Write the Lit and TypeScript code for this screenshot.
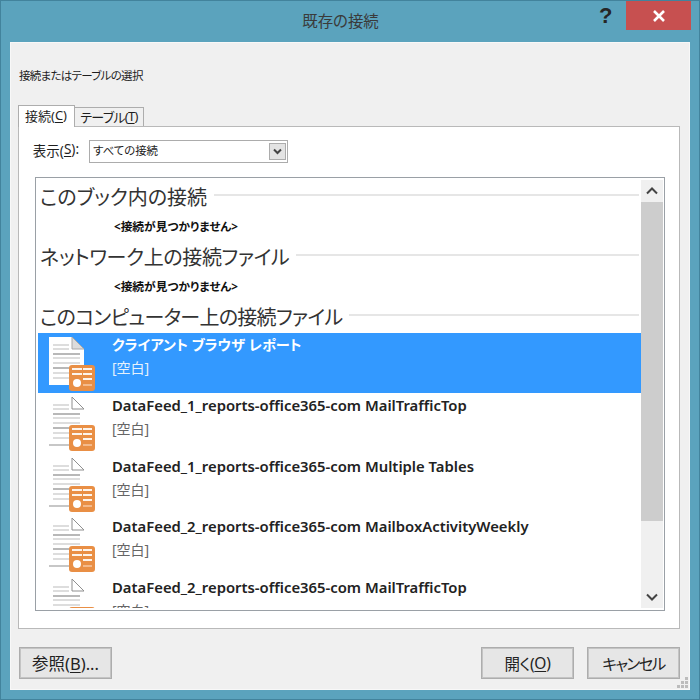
import { LitElement, html, css, svg } from 'lit';
import { customElement, property } from 'lit/decorators.js';

const UI_FONT = css`'Noto Sans', 'Noto Sans CJK JP', sans-serif`;

@customElement('doc-icon')
export class DocIcon extends LitElement {
  @property({ type: Boolean }) selected = false;

  static styles = css`
    :host { display: block; width: 48px; height: 58px; flex: none; }
    svg { display: block; }
  `;

  render() {
    const line = '#a0a0a0';
    const lines = [10, 14, 19, 23, 28, 33, 38, 43];
    return html`<svg width="48" height="58" viewBox="0 0 48 58">
      ${this.selected
        ? svg`<path d="M1 2H24L36 14V50H1Z" fill="#fff"/>
              <path d="M24 2V14H36Z" fill="#dcdcdc" stroke="#a8a8a8"/>`
        : svg`<path d="M24 2L36 14H24Z" fill="#fff" stroke="#8f8f8f"/>
              <path d="M1 50H22" stroke="#8f8f8f"/>`}
      ${lines.map((y, i) => svg`<path d="M5 ${y}H${i < 2 ? 21 : i > 4 ? 21 : 32}" stroke=${line} stroke-width=${i === 2 || i === 5 ? 1.5 : 1} opacity=${i === 2 || i === 5 ? 1 : 0.7}/>`)}
      <rect x="21" y="30" width="26" height="26" rx="3" fill="#e98f45"/>
      <path d="M24 34H34M35 34H44M24 39H34M35 39H44M35 44H44" stroke="#fff" stroke-width="1.8" opacity="0.9"/>
      <circle cx="29" cy="48" r="4" fill="#fff"/>
      <path d="M35 50H44" stroke="#f6c9a4" stroke-width="1.5"/>
    </svg>`;
  }
}

@customElement('app-root')
export class AppRoot extends LitElement {
  static styles = css`
    :host {
      display: block;
      width: 700px;
      height: 700px;
      box-sizing: border-box;
      background: #5ba3bd;
      border: 1px solid #42839c;
      position: relative;
      font-family: ${UI_FONT};
      font-feature-settings: 'palt';
      font-size: 12px;
      color: #1e1e1e;
      overflow: hidden;
    }
    .titlebar {
      height: 41px;
      display: flex;
      align-items: center;
      justify-content: center;
      font-size: 15.4px;
      color: #3a3a3a;
      padding: 0 19px 2px 0;
      box-sizing: border-box;
    }
    .help {
      position: absolute;
      left: 598px;
      top: 2px;
      font: bold 22px 'Liberation Sans', sans-serif;
      color: #262626;
    }
    .close {
      position: absolute;
      left: 625px;
      top: 0;
      width: 65px;
      height: 29px;
      background: #c75050;
      display: flex;
      align-items: center;
      justify-content: center;
    }
    .client {
      margin: 0 9px;
      height: 648px;
      box-sizing: border-box;
      background: #f0f0f0;
      border: 1px solid #f8f8f8;
      padding: 0 9px 0 7px;
      display: flex;
      flex-direction: column;
    }
    .caption {
      height: 62px;
      display: flex;
      align-items: center;
      padding: 1px 0 0 1px;
      font-size: 11.5px;
      letter-spacing: -0.7px;
      box-sizing: border-box;
    }
    .tabs {
      display: flex;
      align-items: flex-end;
      height: 21px;
      position: relative;
      z-index: 1;
    }
    .tab {
      box-sizing: border-box;
      border: 1px solid #adadad;
      border-bottom: none;
      display: flex;
      align-items: center;
      justify-content: center;
      font-size: 13px;
      letter-spacing: -0.7px;
      background: #f0f0f0;
      height: 19px;
      width: 69px;
      padding-bottom: 2px;
      border-left: none;
    }
    .tab.on {
      background: #fff;
      height: 22px;
      width: 57px;
      border-left: 1px solid #adadad;
      margin-bottom: -1px;
      padding: 0 1px 3px 0;
      letter-spacing: 0;
    }
    .panel {
      box-sizing: border-box;
      width: 662px;
      height: 503px;
      background: #fff;
      border: 1px solid #b9b9b9;
      padding: 13px 14px 0 16px;
    }
    .show {
      display: flex;
      align-items: center;
      gap: 10px;
      height: 23px;
    }
    .show label {
      font-size: 13.5px;
      width: 44px;
      display: flex;
      justify-content: flex-end;
      margin-top: -3px;
      white-space: nowrap;
    }
    .select {
      box-sizing: border-box;
      width: 199px;
      height: 23px;
      border: 1px solid #acacac;
      display: flex;
      align-items: center;
      justify-content: space-between;
      padding: 0 1px 0 3px;
      font-size: 11.4px;
    }
    .select span:first-child { padding-bottom: 3px; }
    .select .drop {
      width: 17px;
      height: 17px;
      box-sizing: border-box;
      background: #e3e3e3;
      border: 1px solid #acacac;
      display: flex;
      align-items: center;
      justify-content: center;
    }
    .list {
      box-sizing: border-box;
      margin-top: 14px;
      width: 630px;
      height: 434px;
      border: 1px solid #9aa0a6;
      padding: 2px;
      display: flex;
      overflow: hidden;
    }
    .items {
      width: 603px;
      flex: none;
      overflow: hidden;
      padding-top: 1px;
    }
    .head {
      height: 30px;
      display: flex;
      align-items: center;
      gap: 7px;
      font-size: 20px;
      color: #333;
      padding: 0 2px 0 2px;
      white-space: nowrap;
    }
    .head span { display: block; }
    .head.mid span { letter-spacing: -0.35px; }
    .head.last span { letter-spacing: -0.7px; }
    .head i { flex: 1; height: 2px; background: #e6e6e6; margin-top: -3px; }
    .head.last { margin-bottom: 2px; }
    .none {
      height: 30px;
      box-sizing: border-box;
      padding: 0 0 2px 76px;
      display: flex;
      align-items: center;
      font-size: 11.7px;
      font-weight: 700;
      color: #111;
    }
    .row {
      height: 60.4px;
      display: flex;
      box-sizing: border-box;
      padding: 2px 0 0 10px;
      gap: 16px;
    }
    .row.sel { background: #3399ff; color: #fff; }
    .row .name { font-weight: 600; font-size: 14.83px; color: #222; line-height: 20px; }
    .row.sel .name { color: #fff; font-size: 14.2px; }
    .row .sub { font-size: 14px; color: #666; line-height: 22px; margin-top: 3px; }
    .row.sel .sub { color: #e6f1fc; margin-top: 2px; }
    .scroll {
      width: 22px;
      background: #f0f0f0;
      display: flex;
      flex-direction: column;
      flex: none;
    }
    .arrow { height: 22px; display: flex; align-items: center; justify-content: center; flex: none; }
    .thumb { height: 319px; background: #cdcdcd; flex: none; }
    .track { flex: 1; }
    .buttons {
      flex: 1;
      display: flex;
      align-items: flex-start;
      padding-top: 18px;
      gap: 13px;
    }
    .btn {
      box-sizing: border-box;
      width: 93px;
      height: 32px;
      background: #e6e6e6;
      border: 1px solid #adadad;
      outline: 1px solid #c4c4c4;
      outline-offset: -2px;
      display: flex;
      align-items: center;
      justify-content: center;
      font-size: 15.5px;
      letter-spacing: -0.3px;
      color: #222;
    }
    .btn.browse { margin: 0 auto 0 1px; font-size: 16.5px; letter-spacing: 0; }
    .btn.cancel { letter-spacing: -1.6px; }
    .grip { position: absolute; right: 10px; bottom: 10px; display: block; }
    u { text-underline-offset: 2px; }
  `;

  render() {
    const rows = [
      ['クライアント ブラウザ レポート', true],
      ['DataFeed_1_reports-office365-com MailTrafficTop', false],
      ['DataFeed_1_reports-office365-com Multiple Tables', false],
      ['DataFeed_2_reports-office365-com MailboxActivityWeekly', false],
      ['DataFeed_2_reports-office365-com MailTrafficTop', false],
    ] as const;
    return html`
      <div class="titlebar">既存の接続</div>
      <div class="help">?</div>
      <div class="close">
        <svg width="14" height="12" viewBox="0 0 14 12"><path d="M2 1L12 11M12 1L2 11" stroke="#fff" stroke-width="2.6"/></svg>
      </div>
      <div class="client">
        <div class="caption">接続またはテーブルの選択</div>
        <div class="tabs">
          <div class="tab on">接続(<u>C</u>)</div>
          <div class="tab">テーブル(<u>T</u>)</div>
        </div>
        <div class="panel">
          <div class="show">
            <label>表示(<u>S</u>):</label>
            <div class="select">
              <span>すべての接続</span>
              <span class="drop">
                <svg width="9" height="7" viewBox="0 0 9 7"><path d="M1 1.5L4.5 5L8 1.5" fill="none" stroke="#444" stroke-width="2"/></svg>
              </span>
            </div>
          </div>
          <div class="list">
            <div class="items">
              <div class="head"><span>このブック内の接続</span><i></i></div>
              <div class="none">&lt;接続が見つかりません&gt;</div>
              <div class="head mid"><span>ネットワーク上の接続ファイル</span><i></i></div>
              <div class="none">&lt;接続が見つかりません&gt;</div>
              <div class="head last"><span>このコンピューター上の接続ファイル</span><i></i></div>
              ${rows.map(([name, sel]) => html`
                <div class="row ${sel ? 'sel' : ''}">
                  <doc-icon ?selected=${sel}></doc-icon>
                  <div>
                    <div class="name">${name}</div>
                    <div class="sub">[空白]</div>
                  </div>
                </div>
              `)}
            </div>
            <div class="scroll">
              <div class="arrow"><svg width="12" height="8" viewBox="0 0 12 8"><path d="M1 6.5L6 1.5L11 6.5" fill="none" stroke="#444" stroke-width="2"/></svg></div>
              <div class="thumb"></div>
              <div class="track"></div>
              <div class="arrow"><svg width="12" height="8" viewBox="0 0 12 8"><path d="M1 1.5L6 6.5L11 1.5" fill="none" stroke="#444" stroke-width="2"/></svg></div>
            </div>
          </div>
        </div>
        <div class="buttons">
          <div class="btn browse">参照(<u>B</u>)...</div>
          <div class="btn">開く(<u>O</u>)</div>
          <div class="btn cancel">キャンセル</div>
        </div>
      </div>
      <svg class="grip" width="13" height="13" viewBox="0 0 13 13" fill="#bcbcbc">
        <rect x="9" y="1" width="3" height="3"/><rect x="5" y="5" width="3" height="3"/><rect x="9" y="5" width="3" height="3"/>
        <rect x="1" y="9" width="3" height="3"/><rect x="5" y="9" width="3" height="3"/><rect x="9" y="9" width="3" height="3"/>
      </svg>
    `;
  }
}
